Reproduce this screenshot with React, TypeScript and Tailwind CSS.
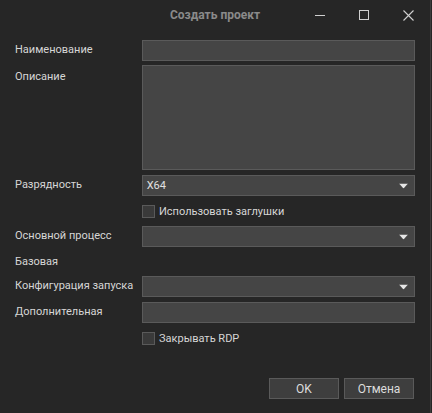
import React from "react";

function Arrow() {
  return (
    <svg width="9" height="5" viewBox="0 0 9 5" className="absolute right-[6px] top-1/2 -translate-y-1/2">
      <path d="M0 0 H9 L4.5 5 Z" fill="#e6e6e6" />
    </svg>
  );
}

function Field({ label, select, value, top }: { label: string; select?: boolean; value?: string; top?: string }) {
  return (
    <div className={`flex h-[21px] items-center ${top ?? ""}`}>
      <div className="w-[127px] whitespace-nowrap text-[11px] text-[#d6d6d6]">{label}</div>
      <div className="relative h-[21px] w-[274px] border border-[#5a5a5a] bg-[#454545] pl-[4px] text-[11px] leading-[19px] text-[#e0e0e0]">
        {value}
        {select && <Arrow />}
      </div>
    </div>
  );
}

function Check({ label, top }: { label: string; top: string }) {
  return (
    <div className={`flex h-[13px] items-center pl-[127px] ${top}`}>
      <div className="h-[13px] w-[13px] border border-[#5a5a5a] bg-[#3a3a3a]" />
      <span className="ml-[4px] text-[11px] leading-[13px] text-[#d6d6d6]">{label}</span>
    </div>
  );
}

export default function App() {
  return (
    <div className="flex h-[413px] w-[432px] bg-[#262626]" style={{ fontFamily: 'Roboto, "Noto Sans", sans-serif' }}>
      <div className="w-[430px]">
        {/* title bar */}
        <div className="relative flex h-[40px] items-start justify-center pt-[6px]">
          <span className="text-[12px] font-bold text-[#8a8a8a]">Создать проект</span>
          <div className="absolute right-0 top-0 flex h-[30px] items-center">
            <div className="flex w-[44px] justify-center">
              <div className="h-px w-[10px] bg-[#d0d0d0]" />
            </div>
            <div className="flex w-[44px] justify-center">
              <div className="h-[10px] w-[10px] border border-[#d0d0d0]" />
            </div>
            <div className="flex w-[44px] justify-center">
              <svg width="11" height="11" viewBox="0 0 11 11">
                <path d="M0.5 0.5 L10.5 10.5 M10.5 0.5 L0.5 10.5" stroke="#d0d0d0" strokeWidth="1.1" />
              </svg>
            </div>
          </div>
        </div>

        <div className="px-[15px]">
          <Field label="Наименование" />
          <div className="mt-[4px] flex">
            <div className="w-[127px] pt-[4px] text-[11px] text-[#d6d6d6]">Описание</div>
            <div className="h-[105px] w-[274px] border border-[#5a5a5a] bg-[#454545]" />
          </div>
          <Field label="Разрядность" select value="X64" top="mt-[5px]" />
          <Check label="Использовать заглушки" top="mt-[9px]" />
          <Field label="Основной процесс" select top="mt-[8px]" />
          <div className="mt-[7px] h-[16px] text-[11px] leading-[16px] text-[#d6d6d6]">Базовая</div>
          <Field label="Конфигурация запуска" select top="mt-[6px]" />
          <Field label="Дополнительная" top="mt-[5px]" />
          <Check label="Закрывать RDP" top="mt-[9px]" />
          <div className="mt-[33px] flex justify-end gap-[5px] pr-[1px]">
            <button className="h-[21px] w-[70px] border border-[#5a5a5a] bg-[#3e3e3e] text-[12px] text-[#dcdcdc]">OK</button>
            <button className="h-[21px] w-[70px] border border-[#5a5a5a] bg-[#3e3e3e] text-[12px] text-[#dcdcdc]">Отмена</button>
          </div>
        </div>
      </div>
      <div className="w-px bg-[#3c3c3c]" />
    </div>
  );
}
